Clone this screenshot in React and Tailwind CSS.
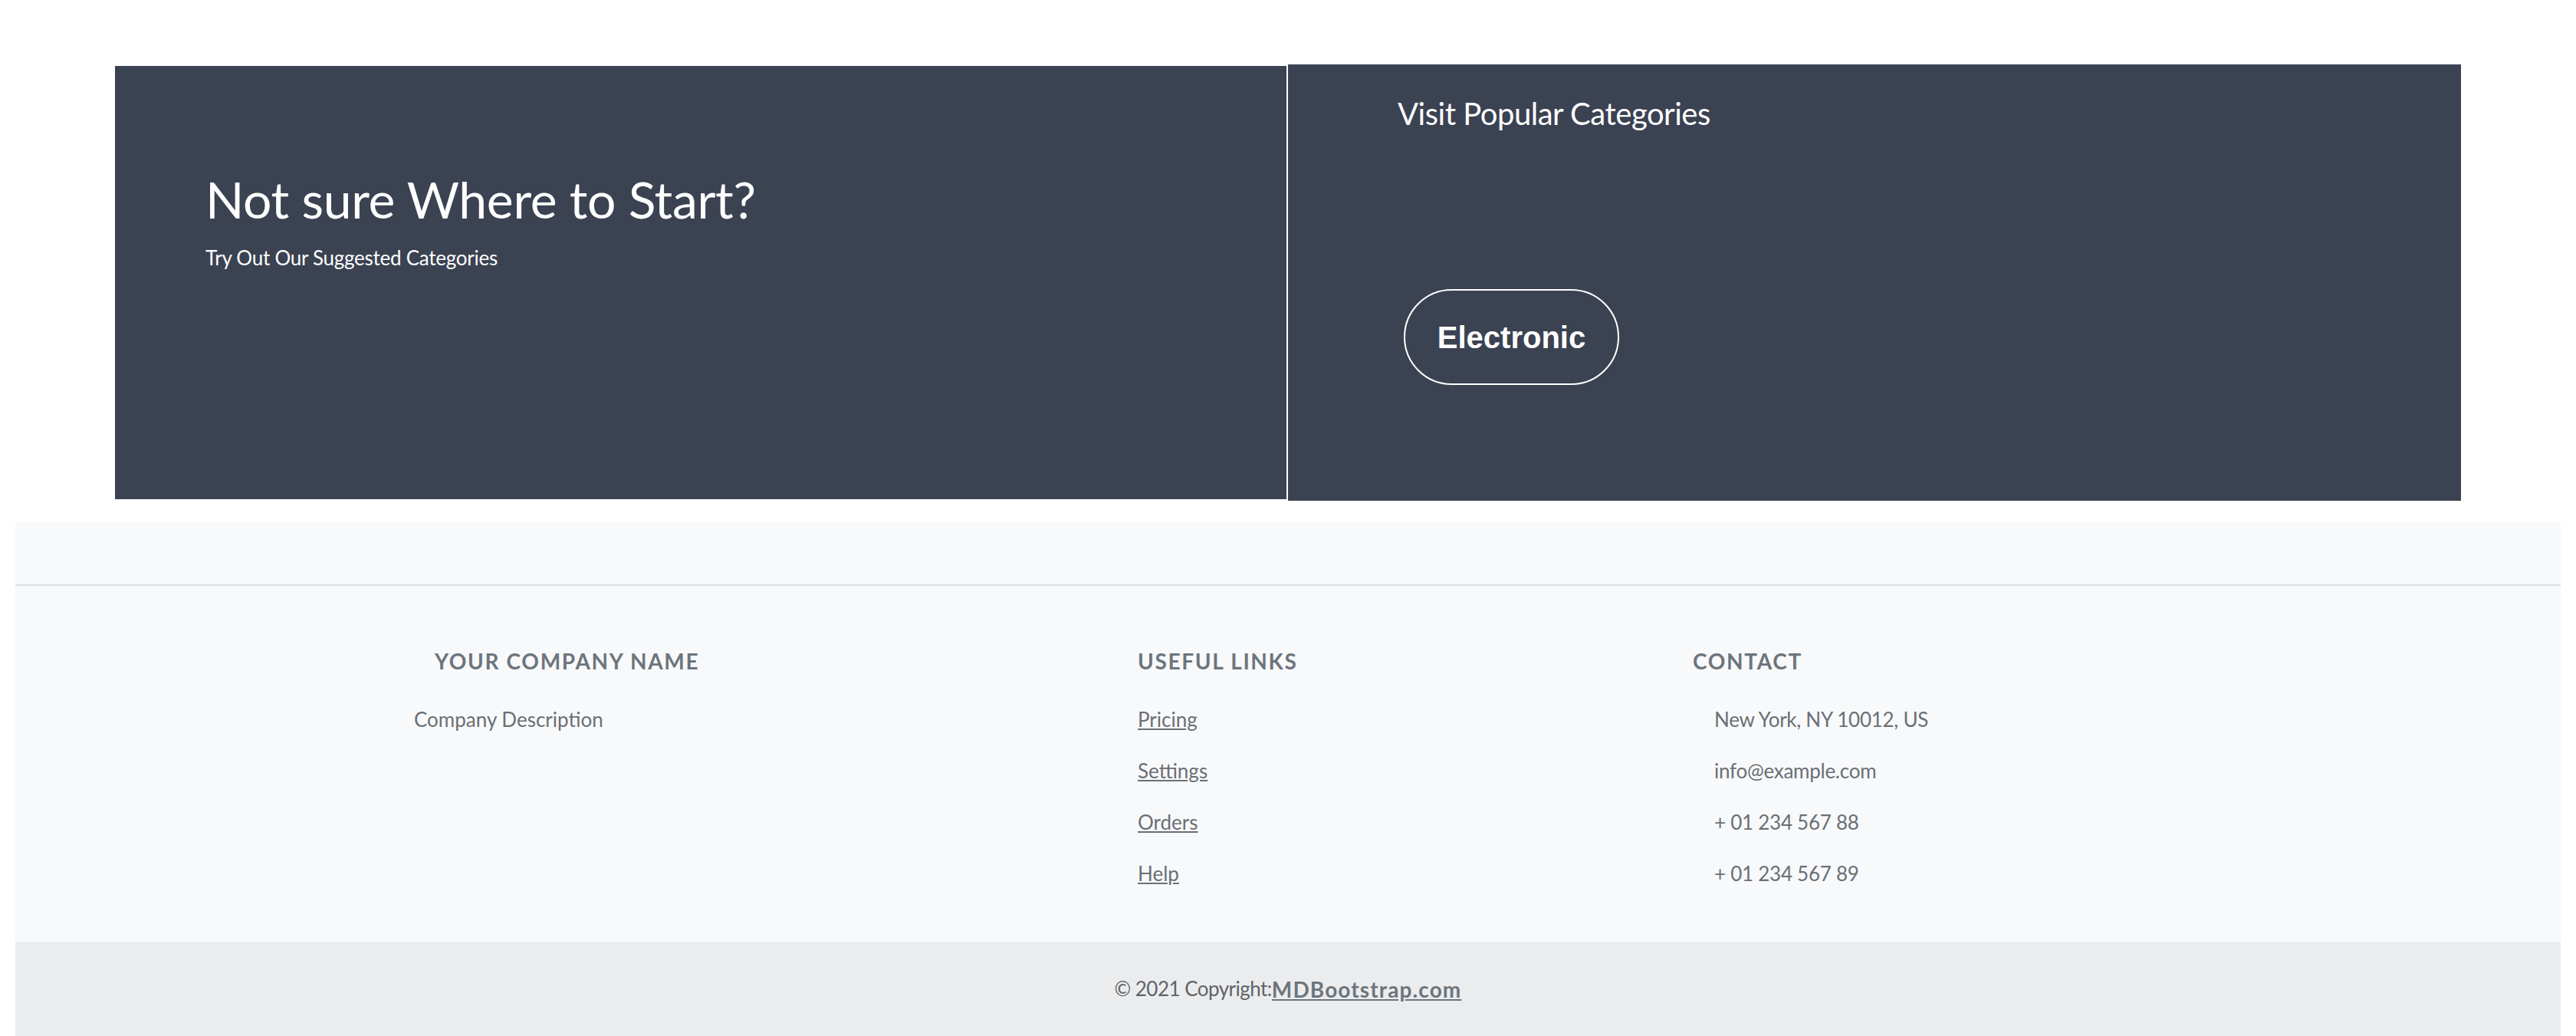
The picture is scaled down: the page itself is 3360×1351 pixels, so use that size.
import React from 'react';

const links = ['Pricing', 'Settings', 'Orders', 'Help'];
const contacts = ['New York, NY 10012, US', 'info@example.com', '+ 01 234 567 88', '+ 01 234 567 89'];

export default function App() {
    return (
        <div className="w-full min-h-[1351px] bg-white" style={{ fontFamily: 'Lato, "Open Sans", sans-serif' }}>
            {/* Suggested categories */}
            <section className="flex items-start gap-[2px] px-[150px] pt-[84px]">
                <div className="mt-[2px] h-[565px] w-[1528px] bg-[#3b4252] pl-[118px] pt-[134px] text-white">
                    <h2 className="text-[66px] leading-[1.2] font-normal tracking-[-0.005em]">Not sure Where to Start?</h2>
                    <p className="mt-[22px] text-[26px] leading-[1.2] tracking-[-0.01em]">Try Out Our Suggested Categories</p>
                </div>
                <div className="h-[569px] w-[1530px] bg-[#3b4252] pl-[143px] pt-[40px] text-white">
                    <h3 className="text-[40px] leading-[1.2] font-normal tracking-[-0.012em]">Visit Popular Categories</h3>
                    <div className="mt-[205px] pl-[8px]">
                        <button
                            className="flex h-[125px] w-[281px] items-center justify-center rounded-full border-2 border-white text-[40px] font-bold text-white"
                            style={{ fontFamily: '"Liberation Sans", Arial, sans-serif' }}
                        >
                            Electronic
                        </button>
                    </div>
                </div>
            </section>

            {/* Footer */}
            <footer className="mx-[20px] mt-[27px] bg-[#f8f9fa] text-[#6c757d]">
                <div className="h-[84px] border-b-2 border-[#dee2e6]" />
                <div className="flex h-[464px] pt-[82px]">
                    <div className="ml-[520px] w-[944px]">
                        <h6 className="pl-[27px] text-[28px] leading-[1.2] font-bold uppercase tracking-[0.06em] text-[#6c757d]">
                            Your Company Name
                        </h6>
                        <p className="mt-[38px] text-[26px] leading-[40px] text-[#6a6f75]">Company Description</p>
                    </div>
                    <div className="w-[724px]">
                        <h6 className="text-[28px] leading-[1.2] font-bold uppercase tracking-[0.06em] text-[#6c757d]">
                            Useful Links
                        </h6>
                        <ul className="mt-[38px]">
                            {links.map((link) => (
                                <li key={link} className="mb-[27px] text-[26px] leading-[40px]">
                                    <a href="#" className="text-[#6a6f75] underline">{link}</a>
                                </li>
                            ))}
                        </ul>
                    </div>
                    <div>
                        <h6 className="text-[28px] leading-[1.2] font-bold uppercase tracking-[0.06em] text-[#6c757d]">
                            Contact
                        </h6>
                        <ul className="mt-[38px] pl-[28px]">
                            {contacts.map((item) => (
                                <li key={item} className="mb-[27px] text-[26px] leading-[40px] tracking-[-0.01em] text-[#6a6f75]">
                                    {item}
                                </li>
                            ))}
                        </ul>
                    </div>
                </div>
                <div className="flex h-[123px] items-center justify-center bg-[#ebeced] text-[26px] text-[#5f6368]">
                    <span className="tracking-[-0.02em]">© 2021 Copyright:</span>
                    <a href="#" className="text-[28px] font-bold tracking-[0.04em] text-[#6c757d] underline">MDBootstrap.com</a>
                </div>
            </footer>
        </div>
    );
}
